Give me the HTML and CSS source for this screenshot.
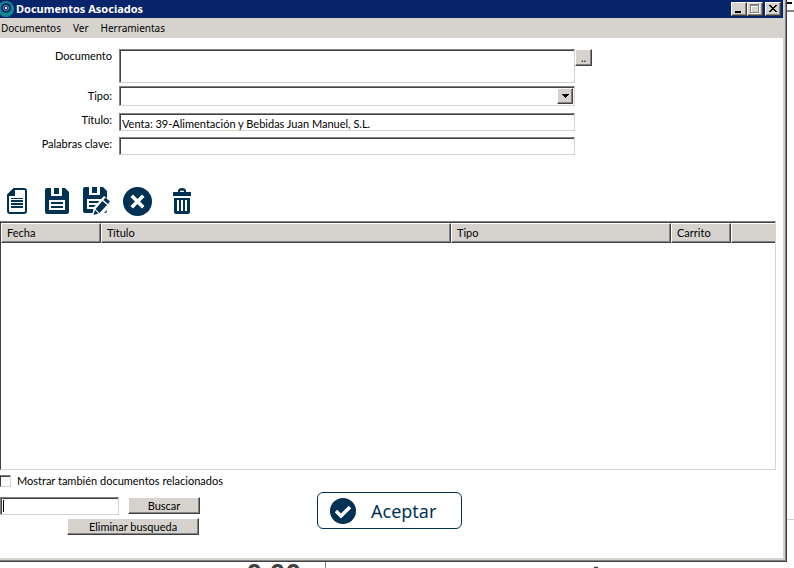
FILE: index.html
```html
<!DOCTYPE html>
<html lang="es">
<head>
    <meta charset="UTF-8">
    <meta name="viewport" content="width=device-width, initial-scale=1.0">
    <title>Documentos Asociados</title>
    <link rel="stylesheet" href="styles.css">
</head>
<body>

    <main class="window">
        <!-- Title bar -->
        <header class="titlebar">
            <svg class="app-icon" width="16" height="16" viewBox="0 0 16 16">
                <circle cx="6" cy="8" r="8" fill="#0b8a8f"/>
                <circle cx="6" cy="7" r="5" fill="#0a246a"/>
                <circle cx="6" cy="7" r="3" fill="#5a8ab8"/>
                <circle cx="6" cy="7" r="2" fill="#0a246a"/>
                <rect x="5" y="6" width="2" height="2" fill="#fff"/>
            </svg>
            <h1>Documentos Asociados</h1>
            <div class="window-controls">
                <button class="btn" type="button" aria-label="Minimizar">
                    <svg width="12" height="10" viewBox="0 0 12 10" shape-rendering="crispEdges"><path d="M2 7h6v2H2z"/></svg>
                </button>
                <button class="btn" type="button" aria-label="Maximizar" disabled>
                    <svg width="12" height="10" viewBox="0 0 12 10" shape-rendering="crispEdges"><path fill="#fff" d="M2 1h9v9H2z"/><path fill="#848284" fill-rule="evenodd" d="M1 0h9v9H1zM2 2v6h7V2z"/><path fill="#d6d3ce" d="M3 3h6v5H3z"/></svg>
                </button>
                <button class="btn close" type="button" aria-label="Cerrar">
                    <svg width="12" height="10" viewBox="0 0 12 10" shape-rendering="crispEdges"><path d="M2 1h2v1h1v1h2V2h1V1h2v1H9v1H8v1H7v1h1v1h1v1h1v1H8V7H7V6H5v1H4v1H2V7h1V6h1V5h1V4H4V3H3V2H2z"/></svg>
                </button>
            </div>
        </header>

        <nav class="menu">
            <a href="#">Documentos</a>
            <a href="#">Ver</a>
            <a href="#">Herramientas</a>
        </nav>

        <!-- Document data -->
        <form class="fields">
            <label for="documento">Documento</label>
            <textarea class="sunken tall" id="documento"></textarea>
            <button class="btn browse" type="button">..</button>

            <label class="low" for="tipo">Tipo:</label>
            <div class="combo sunken">
                <select id="tipo"><option></option></select>
                <span class="btn arrow"><svg width="7" height="4" viewBox="0 0 7 4" shape-rendering="crispEdges"><path d="M0 0h7v1H6v1H5v1H4v1H3V3H2V2H1V1H0z"/></svg></span>
            </div>

            <label for="titulo">Título:</label>
            <input class="sunken" type="text" id="titulo" value="Venta: 39-Alimentación y Bebidas Juan Manuel, S.L.">

            <label for="clave">Palabras clave:</label>
            <input class="sunken" type="text" id="clave">
        </form>

        <!-- Actions -->
        <div class="toolbar">
            <button type="button" aria-label="Nuevo">
                <svg width="20" height="26" viewBox="0 0 20 26">
                    <path d="M7 1h10a2 2 0 0 1 2 2v20a2 2 0 0 1-2 2H3a2 2 0 0 1-2-2V7z" fill="#fff" stroke="#003353" stroke-width="2"/>
                    <path d="M1 8V6l5-5h2v7z" fill="#003353"/>
                    <path d="M4 10h12v1H4zM4 12h12v2H4zM4 15h12v2H4zM4 18h12v2H4z" fill="#003353"/>
                </svg>
            </button>
            <button type="button" aria-label="Guardar">
                <svg width="24" height="26" viewBox="0 0 24 26">
                    <path d="M2 0h18l4 4v20a2 2 0 0 1-2 2H2a2 2 0 0 1-2-2V2a2 2 0 0 1 2-2z" fill="#003353"/>
                    <path d="M6 0h3v6h5V0h3v8H6zM4 12h16v10H4z" fill="#fff"/>
                    <path d="M6 14h12v2H6zM6 18h12v2H6z" fill="#003353"/>
                </svg>
            </button>
            <button type="button" aria-label="Guardar como">
                <svg width="28" height="28" viewBox="0 0 28 28">
                    <path d="M2 0h18l4 4v20a2 2 0 0 1-2 2H2a2 2 0 0 1-2-2V2a2 2 0 0 1 2-2z" fill="#003353"/>
                    <path d="M6 0h3v6h5V0h3v8H6zM4 12h16v10H4z" fill="#fff"/>
                    <path d="M6 14h11v2H6zM6 18h7v2H6z" fill="#003353"/>
                    <path d="M9 28l2-8L21 9l7 5v5l-9 9z" fill="#fff"/>
                    <path d="M22.500 10.500l4.500 4-2 2.500-4.500-4zM19.500 14l4.500 4-7.500 8-4-4zM12 23l3.500 3.500L10.500 28z" fill="#003353"/>
                </svg>
            </button>
            <button type="button" aria-label="Cancelar">
                <svg width="29" height="29" viewBox="0 0 29 29">
                    <circle cx="14.5" cy="14.5" r="14.5" fill="#003353"/>
                    <path d="M10 10l9 9M19 10l-9 9" stroke="#fff" stroke-width="3.6" stroke-linecap="square"/>
                </svg>
            </button>
            <button class="trash" type="button" aria-label="Eliminar">
                <svg width="20" height="26" viewBox="0 0 20 26">
                    <path d="M6 4V3q0-3 4-3t4 3v1h5v4H1V4zM8 3v1h4V3q-2-1-4 0z" fill="#003353" fill-rule="evenodd"/>
                    <path d="M2 10h16v14a2 2 0 0 1-2 2H4a2 2 0 0 1-2-2z" fill="#003353"/>
                    <path d="M5 12h2v11H5zM9 12h2v11H9zM13 12h2v11h-2z" fill="#fff"/>
                </svg>
            </button>
        </div>

        <!-- List of documents -->
        <div class="list">
            <table>
                <colgroup>
                    <col class="col-fecha">
                    <col class="col-titulo">
                    <col class="col-tipo">
                    <col class="col-carrito">
                    <col>
                </colgroup>
                <thead>
                    <tr>
                        <th>Fecha</th>
                        <th>Título</th>
                        <th>Tipo</th>
                        <th>Carrito</th>
                        <th></th>
                    </tr>
                </thead>
                <tbody></tbody>
            </table>
        </div>

        <footer class="bottom">
            <form class="search">
                <div class="check">
                    <input type="checkbox" id="relacionados">
                    <label for="relacionados">Mostrar también documentos relacionados</label>
                </div>
                <div class="search-row">
                    <div class="search-box sunken">
                        <span class="caret"></span>
                        <input type="text" aria-label="Buscar documento">
                    </div>
                    <button class="btn find" type="button">Buscar</button>
                </div>
                <button class="btn clear" type="button">Eliminar busqueda</button>
            </form>
            <button class="accept" type="button">
                <svg width="26" height="26" viewBox="0 0 26 26">
                    <circle cx="13" cy="13" r="13" fill="#003353"/>
                    <path d="M6 13l5 5 9-9" fill="none" stroke="#fff" stroke-width="3.5"/>
                </svg>
                Aceptar
            </button>
        </footer>
    </main>

    <!-- Page that shows around the window -->
    <div class="behind-right">
        <span class="mark"></span>
        <span class="line"></span>
        <span class="rule"></span>
    </div>
    <div class="behind-bottom">
        <span class="amount">0,00</span>
        <span class="comma">,</span>
    </div>

</body>
</html>
```
FILE: styles.css
```css
* {
    box-sizing: border-box;
}

body {
    margin: 0;
    height: 100vh;
    display: grid;
    grid-template-columns: 1fr 7px;
    grid-template-rows: 1fr 6px;
    overflow: hidden;
    background: #fff;
    color: #000;
    font-family: Lato, "Liberation Sans", Arial, sans-serif;
    font-size: 11px;
    line-height: 14px;
}

button, input, select, textarea {
    font: inherit;
    color: inherit;
    margin: 0;
    padding: 0;
}

svg {
    display: block;
}

/* Window frame */
.window {
    display: flex;
    flex-direction: column;
    min-height: 0;
    background: #fff;
    border-right: 1px solid #424142;
    border-bottom: 1px solid #424142;
    box-shadow: inset -1px -1px #848284, inset -3px -3px #d6d3ce;
    padding: 0 3px 3px 0;
}

.titlebar {
    display: flex;
    align-items: center;
    height: 18px;
    background: #08246b;
    color: #fff;
}

.titlebar h1 {
    flex: 1;
    margin: 0;
    font-family: "Noto Sans", "Open Sans", sans-serif;
    font-size: 11px;
    font-weight: bold;
}

.window-controls {
    display: flex;
    padding-right: 2px;
}

.menu {
    display: flex;
    gap: 12px;
    height: 20px;
    padding-left: 1px;
    background: #d6d3ce;
    font-family: "Noto Sans", "Open Sans", sans-serif;
    font-size: 10px;
    line-height: 20px;
}

.menu a {
    color: #000;
    text-decoration: none;
}

/* Raised and sunken controls */
.btn {
    display: flex;
    align-items: center;
    justify-content: center;
    background: #d6d3ce;
    border: 1px solid;
    border-color: #fff #424142 #424142 #fff;
    box-shadow: inset -1px -1px #848284;
}

.sunken {
    background: #fff;
    border: 1px solid;
    border-color: #848284 #d6d3ce #d6d3ce #848284;
    border-radius: 0;
    box-shadow: inset 1px 1px #424142;
    outline: none;
}

.window-controls .btn {
    width: 16px;
    height: 14px;
}

.window-controls .close {
    margin-left: 2px;
}

/* Fields */
.fields {
    display: grid;
    grid-template-columns: 112px minmax(0, 463px) 17px;
    grid-template-rows: 34px 24px 21px 18px;
    row-gap: 3px;
    align-items: start;
    padding-top: 11px;
}

.fields label {
    grid-column: 1;
    text-align: right;
}

.fields .sunken {
    grid-column: 2;
    width: calc(100% - 7px);
    height: 18px;
    margin-left: 7px;
    padding: 2px 0 0 2px;
}

.fields .low {
    padding-top: 3px;
}

.fields .tall {
    height: 34px;
    resize: none;
}

.browse {
    height: 17px;
}

.fields .combo {
    display: flex;
    height: 20px;
    padding: 1px;
}

.combo select {
    flex: 1;
    appearance: none;
    border: 0;
    background: none;
    outline: none;
}

.arrow {
    width: 16px;
}

/* Toolbar */
.toolbar {
    display: flex;
    align-items: center;
    gap: 6px;
    height: 30px;
    margin: 31px 0 5px;
}

.toolbar button {
    display: flex;
    justify-content: center;
    width: 34px;
    border: 0;
    background: none;
}

.toolbar .trash {
    margin-left: 5px;
}

/* List */
.list {
    flex: 1;
    min-height: 0;
    margin-right: 7px;
    border: 1px solid;
    border-color: #848284 #d6d3ce #d6d3ce #424142;
    box-shadow: inset 0 1px #424142;
    padding-top: 1px;
}

table {
    width: 100%;
    table-layout: fixed;
    border-collapse: separate;
    border-spacing: 0;
}

.col-fecha {
    width: 100px;
}

.col-titulo {
    width: 350px;
}

.col-tipo {
    width: 220px;
}

.col-carrito {
    width: 60px;
}

th {
    height: 20px;
    padding: 0 5px;
    background: #d6d3ce;
    border: 1px solid;
    border-color: #fff #424142 #424142 #fff;
    box-shadow: inset -1px -1px #848284;
    font-weight: normal;
    text-align: left;
}

th:last-child {
    border-right: 0;
    box-shadow: inset 0 -1px #848284;
}

/* Bottom area */
.bottom {
    display: grid;
    grid-template-columns: 1fr auto 1fr;
    align-items: start;
    padding: 5px 4px 23px 0;
}

.search {
    display: flex;
    flex-direction: column;
    gap: 3px;
}

.check {
    display: flex;
    align-items: center;
    gap: 6px;
    height: 12px;
    margin-bottom: 7px;
}

.check input {
    appearance: none;
    width: 11px;
    height: 12px;
    border: 1px solid;
    border-color: #848284 #d6d3ce #d6d3ce #424142;
    box-shadow: inset 0 1px #424142;
}

.search-row {
    display: flex;
    gap: 9px;
}

.search-box {
    display: flex;
    width: 119px;
    height: 18px;
    padding: 2px;
}

.search-box input {
    flex: 1;
    min-width: 0;
    border: 0;
    outline: none;
}

.caret {
    width: 1px;
    background: #000;
}

.find {
    width: 72px;
    height: 17px;
}

.clear {
    width: 132px;
    height: 17px;
    margin-left: 67px;
}

.accept {
    display: flex;
    align-items: center;
    gap: 15px;
    width: 145px;
    height: 37px;
    margin-top: 17px;
    padding-left: 12px;
    border: 1px solid #003353;
    border-radius: 6px;
    background: #fff;
    color: #003353;
    font-family: "Noto Sans", "Open Sans", sans-serif;
    font-size: 18px;
}

/* Background page */
.behind-right {
    display: flex;
    flex-direction: column;
}

.mark {
    width: 5px;
    height: 2px;
    margin-top: 2px;
    background: #000;
}

.line {
    height: 2px;
    margin-top: 6px;
    background: #848284;
}

.rule {
    height: 1px;
    margin-top: 507px;
    background: #d6d3ce;
}

.behind-bottom {
    display: flex;
    overflow: hidden;
    color: #424142;
    font-family: "Liberation Sans", Arial, sans-serif;
    font-size: 28px;
    font-weight: bold;
    line-height: 24px;
}

.amount {
    width: 326px;
    padding-right: 24px;
    border-right: 1px solid #848284;
    text-align: right;
}

.comma {
    margin-left: 266px;
    line-height: 0;
}
```
